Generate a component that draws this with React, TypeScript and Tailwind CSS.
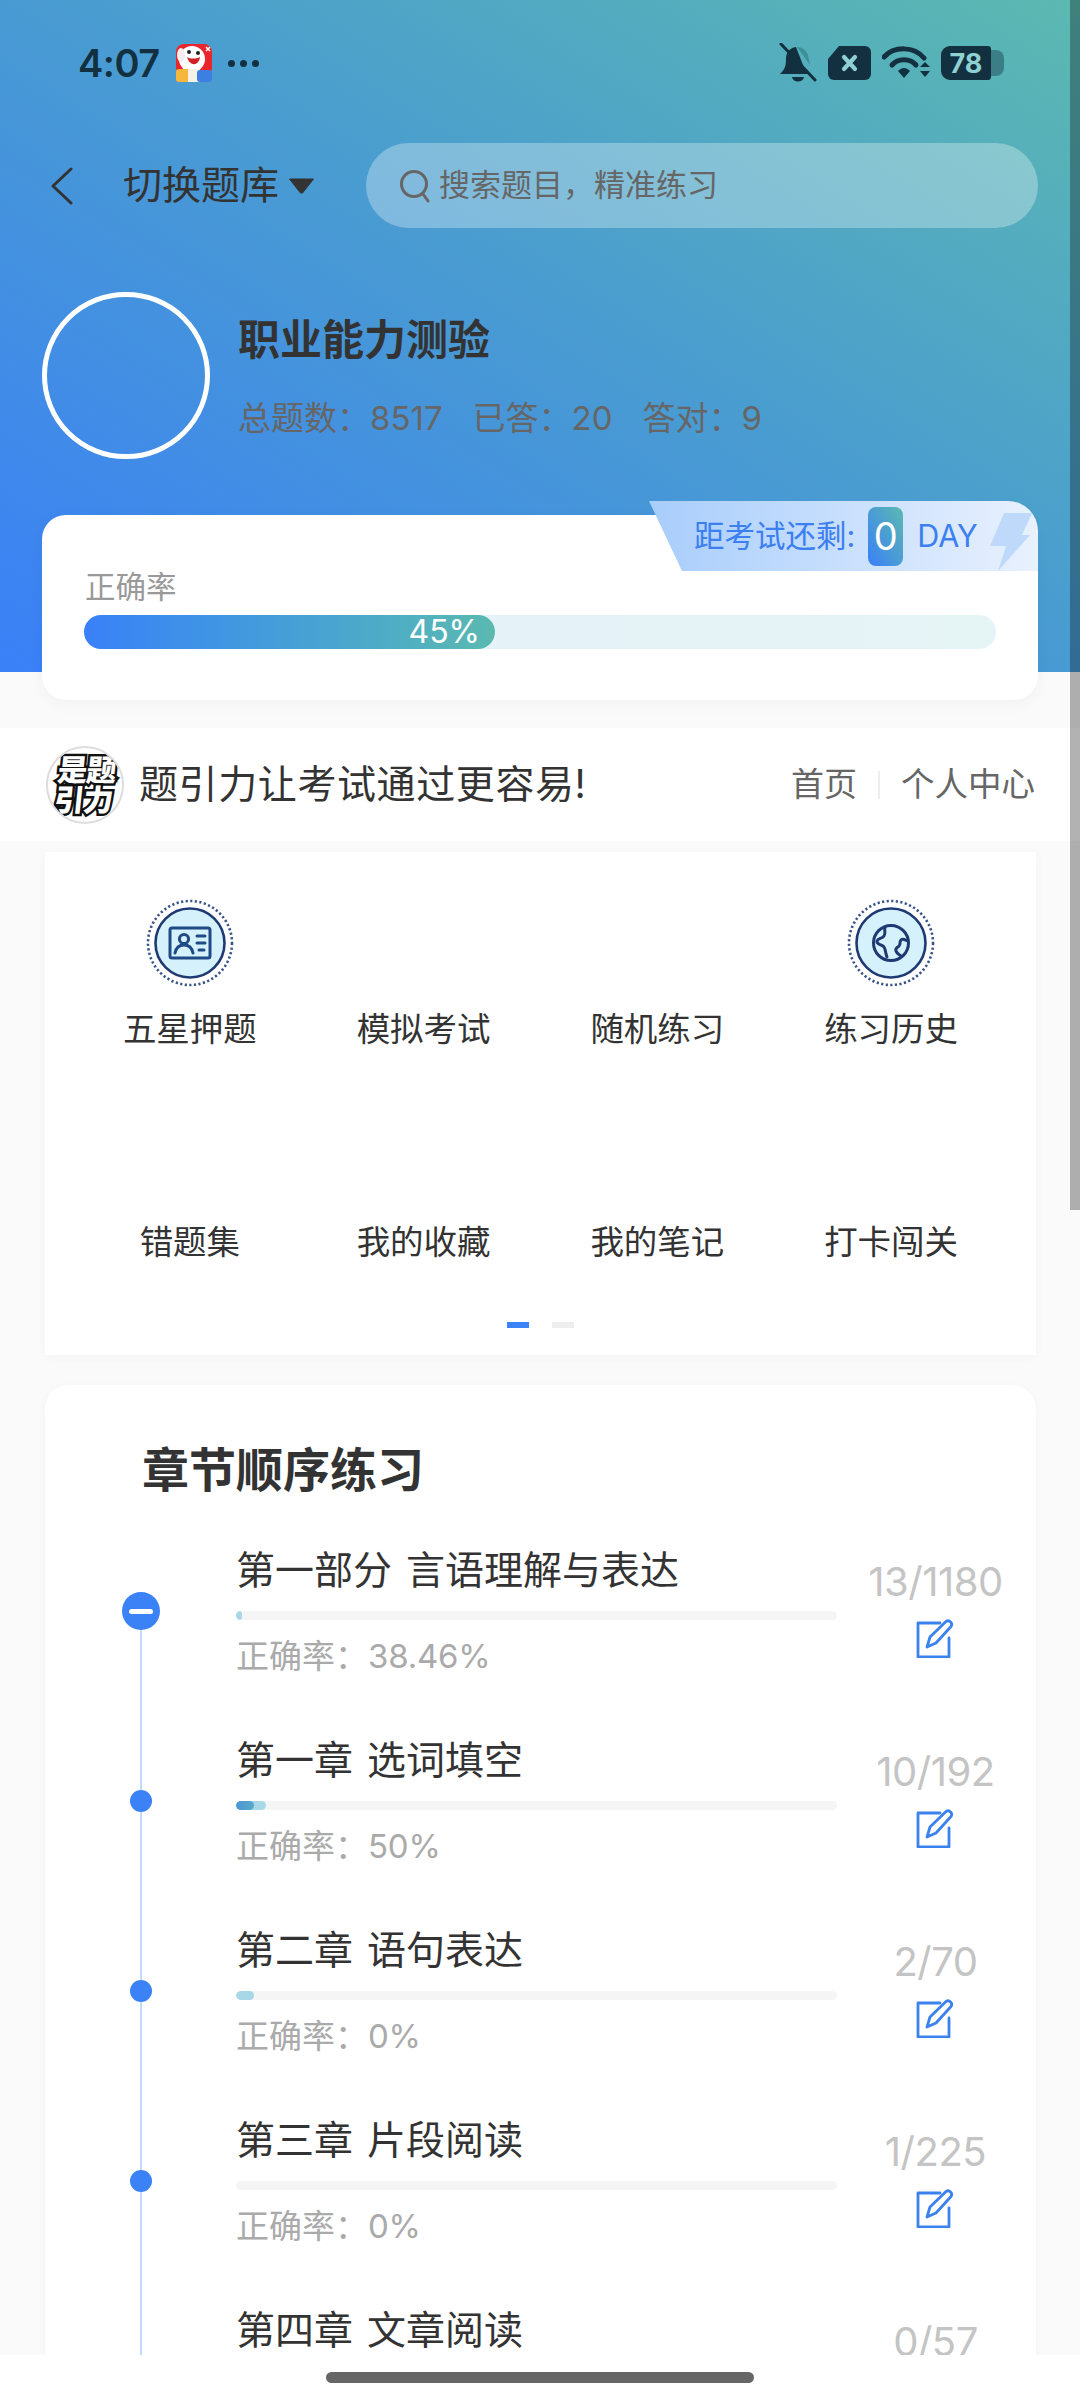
import React from "react";

const rows = [
  { title: "第一部分 言语理解与表达", rate: "38.46%", count: "13/1180", light: 6, dark: 0, big: true },
  { title: "第一章 选词填空", rate: "50%", count: "10/192", light: 30, dark: 18, big: false },
  { title: "第二章 语句表达", rate: "0%", count: "2/70", light: 18, dark: 0, big: false },
  { title: "第三章 片段阅读", rate: "0%", count: "1/225", light: 0, dark: 0, big: false },
  { title: "第四章 文章阅读", rate: "0%", count: "0/57", light: 0, dark: 0, big: false },
];

const topMenu = ["五星押题", "模拟考试", "随机练习", "练习历史"];
const bottomMenu = ["错题集", "我的收藏", "我的笔记", "打卡闯关"];

function EditIcon() {
  return (
    <svg width="40" height="40" viewBox="0 0 40 40" fill="none" stroke="#3b82ee" strokeWidth="2.8" strokeLinejoin="round" strokeLinecap="round">
      <path d="M24 5H2V39H33V20" />
      <path d="M11 29L14 19L30 3.5a3.6 3.6 0 0 1 5 5L20 25Z" />
    </svg>
  );
}

function Medal({ kind }: { kind: "card" | "globe" }) {
  return (
    <svg width="88" height="88" viewBox="0 0 88 88" fill="none">
      <circle cx="44" cy="44" r="42" stroke="#3a5488" strokeWidth="2.6" strokeDasharray="2.2 2.4" />
      <circle cx="44" cy="44" r="34.5" fill="#d5f1fb" stroke="#1f3a73" strokeWidth="2.6" />
      {kind === "card" ? (
        <g stroke="#1f4a86" strokeWidth="3" strokeLinecap="round" strokeLinejoin="round">
          <rect x="24" y="29" width="40" height="30" rx="2" />
          <circle cx="38" cy="40" r="4.6" />
          <path d="M29 54c1-5 4-8 9-8s8 3 9 8" />
          <path d="M51 37h8M51 44h8M53 51h5" />
        </g>
      ) : (
        <g stroke="#1f3a73" strokeWidth="3" strokeLinecap="round" strokeLinejoin="round">
          <circle cx="44" cy="44" r="17.5" />
          <path d="M38 28c-1 4 1 6-1 9s-6 2-7 5 3 3 6 5 2 7 4 11" />
          <path d="M61 42c-3-1-5-3-7-1s0 4-2 6-4 2-3 5 3 3 5 5" />
        </g>
      )}
    </svg>
  );
}

function BellOff() {
  return (
    <svg width="38" height="40" viewBox="0 0 38 40">
      <path d="M17 4c-7 1-10 6-10 12 0 7-1 10-6 15h28c-3-3-4-6-5-9Z" fill="#12303f" />
      <path d="M18 4c5 0 9 3 11 8l2 10Z" fill="#3f8f99" />
      <path d="M13 34h12c-1 6-11 6-12 0Z" fill="#12303f" />
      <path d="M2 1L36 37" stroke="#12303f" strokeWidth="3" strokeLinecap="round" />
    </svg>
  );
}

function Sim() {
  return (
    <svg width="43" height="34" viewBox="0 0 43 34">
      <path d="M11 0H37a6 6 0 0 1 6 6V28a6 6 0 0 1-6 6H6a6 6 0 0 1-6-6V13Z" fill="#12303f" />
      <path d="M16 11L27 23M27 11L16 23" stroke="#8fd0d2" strokeWidth="4.2" strokeLinecap="round" />
    </svg>
  );
}

function Wifi() {
  return (
    <svg width="48" height="34" viewBox="0 0 48 34" fill="none">
      <path d="M2 11C12 0 32 0 42 12" stroke="#12303f" strokeWidth="5" strokeLinecap="round" />
      <path d="M10 19c6-7 18-7 24 0" stroke="#12303f" strokeWidth="5" strokeLinecap="round" />
      <path d="M16 25c4-4 8-4 12 0l-6 7Z" fill="#12303f" />
      <path d="M38 21l5-5 5 5ZM38 25h10l-5 6Z" fill="#12303f" />
    </svg>
  );
}

function AppIcon() {
  return (
    <svg width="38" height="38" viewBox="0 0 38 38">
      <rect x="1" y="0" width="36" height="32" rx="8" fill="#e8262c" />
      <ellipse cx="17" cy="15" rx="13" ry="13" fill="#fff" />
      <ellipse cx="6" cy="11" rx="4" ry="7" fill="#f4eeee" />
      <circle cx="14" cy="8" r="2" fill="#222" />
      <circle cx="23" cy="9" r="2" fill="#222" />
      <path d="M12 13c3 2 9 2 13 0-1 9-10 10-13 0Z" fill="#d32027" />
      <path d="M31 3l4 4M35 3l-4 4" stroke="#fff" strokeWidth="1.5" />
      <rect x="1" y="25" width="14" height="13" rx="3" fill="#f6b73c" />
      <rect x="13" y="25" width="12" height="13" fill="#f4f1e6" />
      <rect x="22" y="26" width="15" height="12" rx="3" fill="#3c7fe0" />
    </svg>
  );
}

function Logo() {
  return (
    <div className="w-[78px] h-[78px] rounded-full border-2 border-[#dddddd] bg-white flex flex-col items-center justify-center overflow-hidden shrink-0">
      <div className="-skew-x-6 flex flex-col items-center font-black text-white leading-none text-[30px] [-webkit-text-stroke:5px_#111111] [paint-order:stroke_fill]">
        <span className="h-[30px] tracking-[-1px]">是题</span>
        <span className="h-[30px] tracking-[-1px]">引力</span>
      </div>
    </div>
  );
}

function Row({ r, index }: { r: (typeof rows)[number]; index: number }) {
  return (
    <div className="flex h-[190px]">
      <div className="w-[192px] shrink-0 flex flex-col items-center">
        <div className={`w-[2px] ${r.big ? "h-[47px] bg-transparent" : "h-[55px] bg-[#bfdbfe]"}`} />
        {r.big ? (
          <div className="w-[38px] h-[38px] rounded-full bg-[#3b82f6] flex items-center justify-center">
            <div className="w-[24px] h-[5px] rounded-full bg-white" />
          </div>
        ) : (
          <div className="w-[22px] h-[22px] rounded-full bg-[#3b82f6]" />
        )}
        <div className="w-[2px] flex-1 bg-[#bfdbfe]" />
      </div>
      <div className="w-[600px] shrink-0">
        <div className="-ml-[1px] h-[50px] flex items-center text-[39px] text-[#333333] whitespace-nowrap [word-spacing:3px]">{r.title}</div>
        <div className="-ml-[1px] mt-[16px] h-[9px] rounded-full bg-[#f5f5f5] overflow-hidden">
          <div className="h-full rounded-full bg-[#a8d8e8]" style={{ width: r.light }}>
            <div className="h-full rounded-full bg-gradient-to-r from-[#4b97d6] to-[#5aa9c8]" style={{ width: r.dark }} />
          </div>
        </div>
        <div className="-ml-[1px] mt-[15px] h-[44px] flex items-center text-[33px] text-[#aaaaaa] whitespace-nowrap">
          <span>正确率：</span>
          <span className="tracking-[-0.2px]">{r.rate}</span>
        </div>
      </div>
      <div className="flex-1 flex flex-col items-center pr-[2px]">
        <div className="mt-[12px] h-[50px] flex items-center text-[40px] text-[#c4c4c4] tracking-[-0.5px]">{r.count}</div>
        <div className="mt-[11px]" data-row={index}>
          <EditIcon />
        </div>
      </div>
    </div>
  );
}

export default function App() {
  return (
    <div className="relative w-[1080px] h-[2400px] overflow-hidden bg-white font-['Inter','Noto_Sans_CJK_SC',sans-serif]">
      <div className="h-[2355px] overflow-hidden bg-[#fafafa]">
        {/* Hero */}
        <div className="pb-[28px] bg-no-repeat bg-[length:100%_672px] bg-[linear-gradient(to_top_right,#3a80f8,#4a9dcf_55%,#5bb9b0)]">
          <div className="h-[126px] flex items-center pl-[78px] pr-[76px]">
            <span className="text-[38px] font-semibold text-[#12303f] tracking-[-0.5px]">4:07</span>
            <div className="ml-[15px]"><AppIcon /></div>
            <div className="ml-[15px] flex gap-[5px]">
              <div className="w-[7px] h-[7px] rounded-full bg-[#12303f]" />
              <div className="w-[7px] h-[7px] rounded-full bg-[#12303f]" />
              <div className="w-[7px] h-[7px] rounded-full bg-[#12303f]" />
            </div>
            <div className="ml-auto flex items-center gap-[11px]">
              <BellOff />
              <Sim />
              <Wifi />
              <div className="flex items-center">
                <div className="w-[50px] h-[34px] rounded-l-[9px] rounded-r-[3px] bg-[#12303f] flex items-center justify-center text-[27px] font-bold text-[#8fd0d2] leading-none">78</div>
                <div className="w-[13px] h-[26px] rounded-r-[8px] bg-[#12303f]/40" />
              </div>
            </div>
          </div>

          <div className="mt-[17px] h-[85px] flex items-center pl-[50px] pr-[42px]">
            <svg width="24" height="38" viewBox="0 0 24 38" fill="none" stroke="#333333" strokeWidth="3" strokeLinecap="round" strokeLinejoin="round">
              <path d="M21 2L3 19L21 36" />
            </svg>
            <span className="ml-[49px] text-[39px] text-[#333333] whitespace-nowrap">切换题库</span>
            <svg className="ml-[9px]" width="27" height="16" viewBox="0 0 26 16">
              <path d="M1 1H25L14 15H12Z" fill="#333333" stroke="#333333" strokeLinejoin="round" />
            </svg>
            <div className="ml-auto w-[672px] h-[85px] rounded-full bg-white/30 flex items-center pl-[33px]">
              <svg width="32" height="34" viewBox="0 0 32 34" fill="none" stroke="#666666" strokeWidth="3" strokeLinecap="round">
                <circle cx="15" cy="15" r="12.5" />
                <path d="M24 25L29 32" />
              </svg>
              <span className="ml-[8px] text-[31px] text-[#666666] whitespace-nowrap">搜索题目，精准练习</span>
            </div>
          </div>

          <div className="mt-[64px] h-[167px] flex pl-[42px]">
            <div className="w-[168px] h-[167px] rounded-full border-[5px] border-white shrink-0" />
            <div className="ml-[28px]">
              <div className="mt-[20px] h-[54px] flex items-center text-[42px] font-bold text-[#333333]">职业能力测验</div>
              <div className="mt-[31px] h-[44px] flex items-center gap-[30px] text-[33px] text-[#666666] whitespace-nowrap">
                <span>总题数：8517</span>
                <span>已答：20</span>
                <span>答对：9</span>
              </div>
            </div>
          </div>

          <div className="relative mt-[56px] mx-[42px] h-[185px] rounded-[24px] bg-white shadow-[0_4px_16px_rgba(0,0,0,0.04)] pt-[52px] px-[42px]">
            <div className="absolute right-0 top-[-14px] w-[389px] h-[70px] rounded-tr-[30px] bg-gradient-to-r from-[#a8cdfb] to-[#e9f1fd] [clip-path:polygon(0_0,100%_0,100%_100%,33px_100%)] flex items-center pl-[45px] overflow-hidden">
              <span className="text-[30.5px] text-[#3b7ff0] whitespace-nowrap">距考试还剩:</span>
              <div className="ml-[13px] w-[35px] h-[59px] rounded-[8px] bg-[linear-gradient(to_top_right,#3a80f8,#5bb9b0)] flex items-center justify-center text-[38px] text-white">0</div>
              <span className="ml-[14px] text-[30.5px] text-[#3b7ff0]">DAY</span>
              <svg className="ml-[12px] mt-[12px]" width="42" height="58" viewBox="0 0 42 58">
                <path d="M14 0H42L32 22H40L8 58L16 33H0Z" fill="#bfd9fb" />
              </svg>
            </div>
            <div className="pl-[1px] h-[40px] flex items-center text-[30.5px] text-[#999999]">正确率</div>
            <div className="mt-[8px] h-[34px] rounded-full bg-gradient-to-r from-[#e6f1fb] to-[#e5f4f5]">
              <div className="w-[411px] h-full rounded-full bg-gradient-to-r from-[#3a80f8] to-[#5bb9b0] flex items-center justify-end pr-[15px] text-[32px] text-white">45%</div>
            </div>
          </div>
        </div>

        {/* Brand bar */}
        <div className="h-[113px] bg-white flex items-center pl-[46px] pr-[45px]">
          <Logo />
          <span className="ml-[15px] text-[39px] text-[#333333] tracking-[0.6px] whitespace-nowrap">题引力让考试通过更容易!</span>
          <span className="ml-auto text-[33px] text-[#666666]">首页</span>
          <div className="mx-[21px] w-[2px] h-[28px] bg-[#eeeeee]" />
          <span className="text-[33.5px] text-[#666666]">个人中心</span>
        </div>

        {/* Menu */}
        <div className="mt-[11px] mx-[45px] w-[991px] h-[503px] bg-white shadow-[0_2px_10px_rgba(0,0,0,0.03)] pt-[48px]">
          <div className="grid grid-cols-4 gap-y-[62px] px-[28px]">
            {topMenu.map((m, i) => (
              <div key={m} className="flex flex-col items-center">
                <div className="h-[86px] flex items-center justify-center">
                  {i === 0 && <Medal kind="card" />}
                  {i === 3 && <Medal kind="globe" />}
                </div>
                <div className="mt-[21px] h-[44px] flex items-center text-[33.5px] text-[#333333] whitespace-nowrap">{m}</div>
              </div>
            ))}
            {bottomMenu.map((m) => (
              <div key={m} className="flex flex-col items-center">
                <div className="h-[86px]" />
                <div className="mt-[21px] h-[44px] flex items-center text-[33.5px] text-[#333333] whitespace-nowrap">{m}</div>
              </div>
            ))}
          </div>
          <div className="mt-[58px] flex justify-center gap-[23px]">
            <div className="w-[22px] h-[6px] bg-[#3b82f6]" />
            <div className="w-[22px] h-[6px] bg-[#eeeeee]" />
          </div>
        </div>

        {/* Chapters */}
        <div className="mt-[30px] mx-[45px] w-[991px] rounded-[24px] bg-white shadow-[0_2px_10px_rgba(0,0,0,0.03)] pt-[55px] pb-[40px]">
          <div className="pl-[97px] h-[60px] flex items-center text-[47px] font-semibold text-[#333333]">章节顺序练习</div>
          <div className="mt-[45px]">
            {rows.map((r, i) => (
              <Row key={r.title} r={r} index={i} />
            ))}
          </div>
        </div>
      </div>

      {/* Gesture bar */}
      <div className="h-[45px] bg-white flex justify-center pt-[17px]">
        <div className="w-[428px] h-[11px] rounded-full bg-[#666666]" />
      </div>

      {/* Scrollbar overlay */}
      <div className="absolute right-0 top-0 w-[10px] h-[1210px] bg-black/30" />
    </div>
  );
}
